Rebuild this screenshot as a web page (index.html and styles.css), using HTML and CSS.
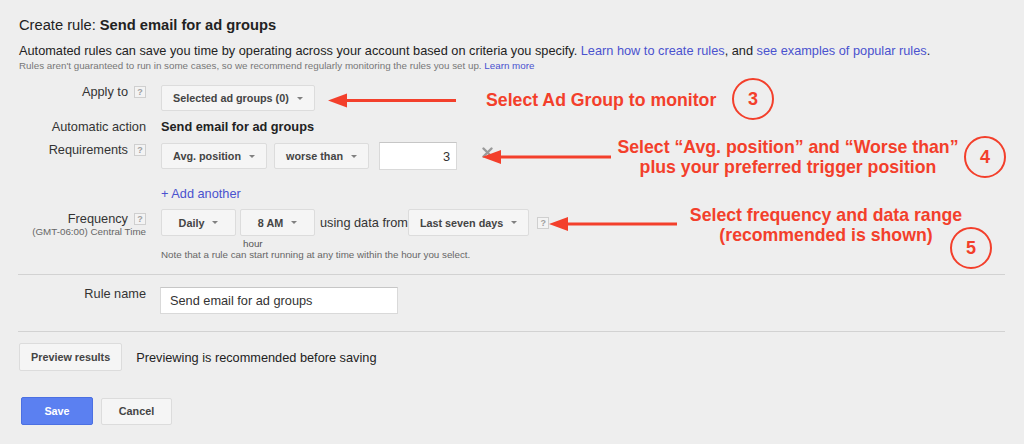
FILE: index.html
```html
<!DOCTYPE html>
<html lang="en">
<head>
<meta charset="utf-8">
<title>Create rule</title>
<link rel="stylesheet" href="styles.css">
</head>
<body>
<div class="page">
  <h1 class="title">Create rule: <b>Send email for ad groups</b></h1>
  <p class="intro">Automated rules can save you time by operating across your account based on criteria you specify. <a href="#">Learn how to create rules</a>, and <a href="#">see examples of popular rules</a>.</p>
  <p class="fine">Rules aren't guaranteed to run in some cases, so we recommend regularly monitoring the rules you set up. <a href="#">Learn more</a></p>

  <div class="row row-apply">
    <div class="row-label"><span>Apply to</span><span class="help">?</span></div>
    <div class="field">
      <button type="button" class="dd">Selected ad groups (0)<span class="caret"></span></button>
    </div>
  </div>

  <div class="row row-action">
    <div class="row-label">Automatic action</div>
    <div class="field"><strong class="action">Send email for ad groups</strong></div>
  </div>

  <div class="row row-req">
    <div class="row-label"><span>Requirements</span><span class="help">?</span></div>
    <div class="field field-req">
      <button type="button" class="dd">Avg. position<span class="caret"></span></button>
      <button type="button" class="dd dd-op">worse than<span class="caret"></span></button>
      <input class="txt txt-num" type="text" value="3" readonly>
      <span class="remove"><svg width="11" height="11" viewBox="0 0 11 11"><path d="M1.5 1.5 L9.5 9.5 M9.5 1.5 L1.5 9.5" stroke="#9a9a9a" stroke-width="2.4" stroke-linecap="round"/></svg></span>
    </div>
  </div>

  <div class="row row-add">
    <div class="row-label"></div>
    <div class="field"><a href="#" class="add">+ Add another</a></div>
  </div>

  <div class="row row-freq">
    <div class="row-label row-label-stack">
      <div class="freq-line"><span>Frequency</span><span class="help">?</span></div>
      <div class="tz">(GMT-06:00) Central Time</div>
    </div>
    <div class="field">
      <div class="freq-controls">
        <button type="button" class="dd">Daily<span class="caret"></span></button>
        <div class="hour-col">
          <button type="button" class="dd">8 AM<span class="caret"></span></button>
          <div class="hour">hour</div>
        </div>
        <span class="using">using data from</span>
        <button type="button" class="dd dd-range">Last seven days<span class="caret"></span></button>
        <span class="help help-range">?</span>
      </div>
      <div class="note">Note that a rule can start running at any time within the hour you select.</div>
    </div>
  </div>

  <div class="sep sep-1"></div>

  <div class="row row-name">
    <div class="row-label">Rule name</div>
    <div class="field"><input class="txt txt-name" type="text" value="Send email for ad groups" readonly></div>
  </div>

  <div class="sep sep-2"></div>

  <div class="preview">
    <button type="button" class="btn btn-preview">Preview results</button>
    <span class="preview-text">Previewing is recommended before saving</span>
  </div>

  <div class="actions">
    <button type="button" class="btn btn-save">Save</button>
    <button type="button" class="btn btn-cancel">Cancel</button>
  </div>

  <div class="annotations">
    <svg class="arrows" width="1024" height="444" viewBox="0 0 1024 444">
      <g fill="#f33f2b" stroke="#f33f2b">
        <line x1="344" y1="100.5" x2="456" y2="100.5" stroke-width="3"/>
        <polygon points="328,100.5 347,93.5 347,107.5" stroke="none"/>
        <line x1="498" y1="157" x2="611" y2="157" stroke-width="3"/>
        <polygon points="482,157 501,150 501,164" stroke="none"/>
        <line x1="565" y1="224" x2="677" y2="224" stroke-width="3"/>
        <polygon points="549,224 568,217 568,231" stroke="none"/>
      </g>
    </svg>
    <div class="callout callout-1">Select Ad Group to monitor</div>
    <div class="callout callout-2">Select “Avg. position” and “Worse than”<br>plus your preferred trigger position</div>
    <div class="callout callout-3">Select frequency and data range<br>(recommended is shown)</div>
    <div class="step step-3">3</div>
    <div class="step step-4">4</div>
    <div class="step step-5">5</div>
  </div>
</div>
</body>
</html>
```

FILE: styles.css
```css
* { box-sizing: border-box; }

html, body {
  margin: 0;
  background: #eeeeee;
}

body {
  font-family: "Liberation Sans", Arial, sans-serif;
  font-size: 12.75px;
  color: #222;
}

a { color: #4a52cf; text-decoration: none; }

.page {
  position: relative;
  width: 1024px;
  height: 444px;
  padding: 16px 19px 0 19px;
  overflow: hidden;
}

.title {
  margin: 0;
  font-size: 14.7px;
  line-height: 18px;
  font-weight: normal;
  color: #222;
}

.title b { font-weight: bold; }

.intro {
  margin: 9px 0 0;
  line-height: 16px;
}

.fine {
  margin: 0;
  font-size: 9.8px;
  line-height: 13px;
  color: #777;
}

/* form rows */
.row {
  display: grid;
  grid-template-columns: 127px 1fr;
  column-gap: 15px;
  align-items: start;
}

.row-label {
  display: flex;
  justify-content: flex-end;
  align-items: center;
  line-height: 14px;
  height: 14px;
  color: #333;
  white-space: nowrap;
}

.help {
  display: inline-flex;
  align-items: center;
  justify-content: center;
  width: 12px;
  height: 12px;
  margin-left: 6px;
  border: 1px solid #cfcfcf;
  background: #f3f3f3;
  color: #a0a0a0;
  font-size: 9px;
  font-weight: bold;
  line-height: 10px;
}

.field { display: flex; align-items: center; }

.row-apply { margin-top: 13px; }

.row-action { margin-top: 8px; }
.row-action .row-label { height: 16px; line-height: 16px; }
.action { line-height: 16px; font-weight: bold; color: #222; }

.row-req { margin-top: 7px; }
.row-req .row-label { margin-top: 1px; }

.row-add { margin-top: 16px; }
.add { line-height: 16px; }

.row-freq { margin-top: 7px; }

.row-label-stack {
  flex-direction: column;
  justify-content: flex-start;
  align-items: flex-end;
  height: auto;
  padding-top: 3px;
}

.freq-line { display: flex; align-items: center; line-height: 14px; }

.tz {
  font-size: 9.8px;
  line-height: 12px;
  color: #666;
}

.row-freq .field { flex-direction: column; align-items: flex-start; }

.freq-controls { display: flex; align-items: flex-start; }

.hour-col {
  display: flex;
  flex-direction: column;
  margin-left: 4px;
}

.hour {
  margin-top: 2px;
  padding-left: 3px;
  font-size: 9.8px;
  line-height: 11px;
  color: #555;
}

.using {
  margin-left: 5px;
  line-height: 27px;
  color: #333;
}

.dd-range { margin-left: 4px; }

.help-range { margin-left: 8px; margin-top: 8px; }

.note {
  font-size: 9.8px;
  line-height: 11px;
  color: #666;
}

/* dropdown buttons */
.dd {
  display: inline-flex;
  align-items: center;
  justify-content: center;
  gap: 8px;
  min-width: 75px;
  height: 26px;
  padding: 0 11px;
  margin: 0;
  background: #f5f5f5;
  border: 1px solid #dcdcdc;
  border-radius: 2px;
  font-family: "Liberation Sans", Arial, sans-serif;
  font-size: 10.8px;
  font-weight: bold;
  color: #444;
  white-space: nowrap;
}

.row-freq .dd { height: 27px; }

.caret {
  width: 0;
  height: 0;
  border-left: 3px solid transparent;
  border-right: 3px solid transparent;
  border-top: 3px solid #808080;
}

.dd-op { margin-left: 7px; }

.txt {
  height: 28px;
  margin: 0;
  background: #fff;
  border: 1px solid #d9d9d9;
  border-top-color: #c6c6c6;
  font-family: "Liberation Sans", Arial, sans-serif;
  font-size: 12.75px;
  color: #333;
  outline: none;
}

.txt-num {
  width: 78px;
  margin-left: 10px;
  padding: 0 6px;
  text-align: right;
}

.remove {
  display: inline-flex;
  margin-left: 25px;
  margin-top: -8px;
}

.sep {
  height: 1px;
  margin-left: -1px;
  background: #d2d2d2;
}

.sep-1 { margin-top: 14px; }

.row-name { margin-top: 12px; }

.txt-name {
  width: 238px;
  height: 27px;
  margin-left: -1px;
  padding: 0 9px;
}

.sep-2 { margin-top: 17px; }

.preview {
  display: flex;
  align-items: center;
  margin-top: 11px;
}

.btn {
  display: inline-flex;
  align-items: center;
  justify-content: center;
  height: 28px;
  margin: 0;
  padding: 0 11px;
  background: #f5f5f5;
  border: 1px solid #dcdcdc;
  border-radius: 2px;
  font-family: "Liberation Sans", Arial, sans-serif;
  font-size: 10.8px;
  font-weight: bold;
  color: #444;
  white-space: nowrap;
}

.btn-preview { min-width: 102px; }

.preview-text {
  margin-left: 14px;
  color: #222;
}

.actions {
  display: flex;
  align-items: center;
  margin-top: 26px;
  padding-left: 2px;
}

.btn-save {
  width: 72px;
  background: #5b80f1;
  border-color: #4b70e2;
  color: #fff;
}

.btn-cancel {
  width: 71px;
  height: 27px;
  margin-left: 8px;
}

/* annotation overlay */
.annotations {
  position: absolute;
  inset: 0;
  pointer-events: none;
}

.arrows { position: absolute; left: 0; top: 0; }

.callout {
  position: absolute;
  font-family: "Liberation Sans", Arial, sans-serif;
  font-size: 17.7px;
  line-height: 20px;
  font-weight: bold;
  color: #f33f2b;
  white-space: nowrap;
}

.callout-1 { left: 486px; top: 90px; }
.callout-2 { left: 598px; top: 137px; width: 380px; text-align: center; }
.callout-3 { left: 676px; top: 205px; width: 300px; text-align: center; }

.step {
  position: absolute;
  width: 42px;
  height: 42px;
  border: 2.6px solid #f33f2b;
  border-radius: 50%;
  display: flex;
  align-items: center;
  justify-content: center;
  font-size: 18px;
  font-weight: bold;
  color: #f33f2b;
}

.step-3 { left: 732px; top: 78px; }
.step-4 { left: 964px; top: 136px; }
.step-5 { left: 950px; top: 227px; }
```
